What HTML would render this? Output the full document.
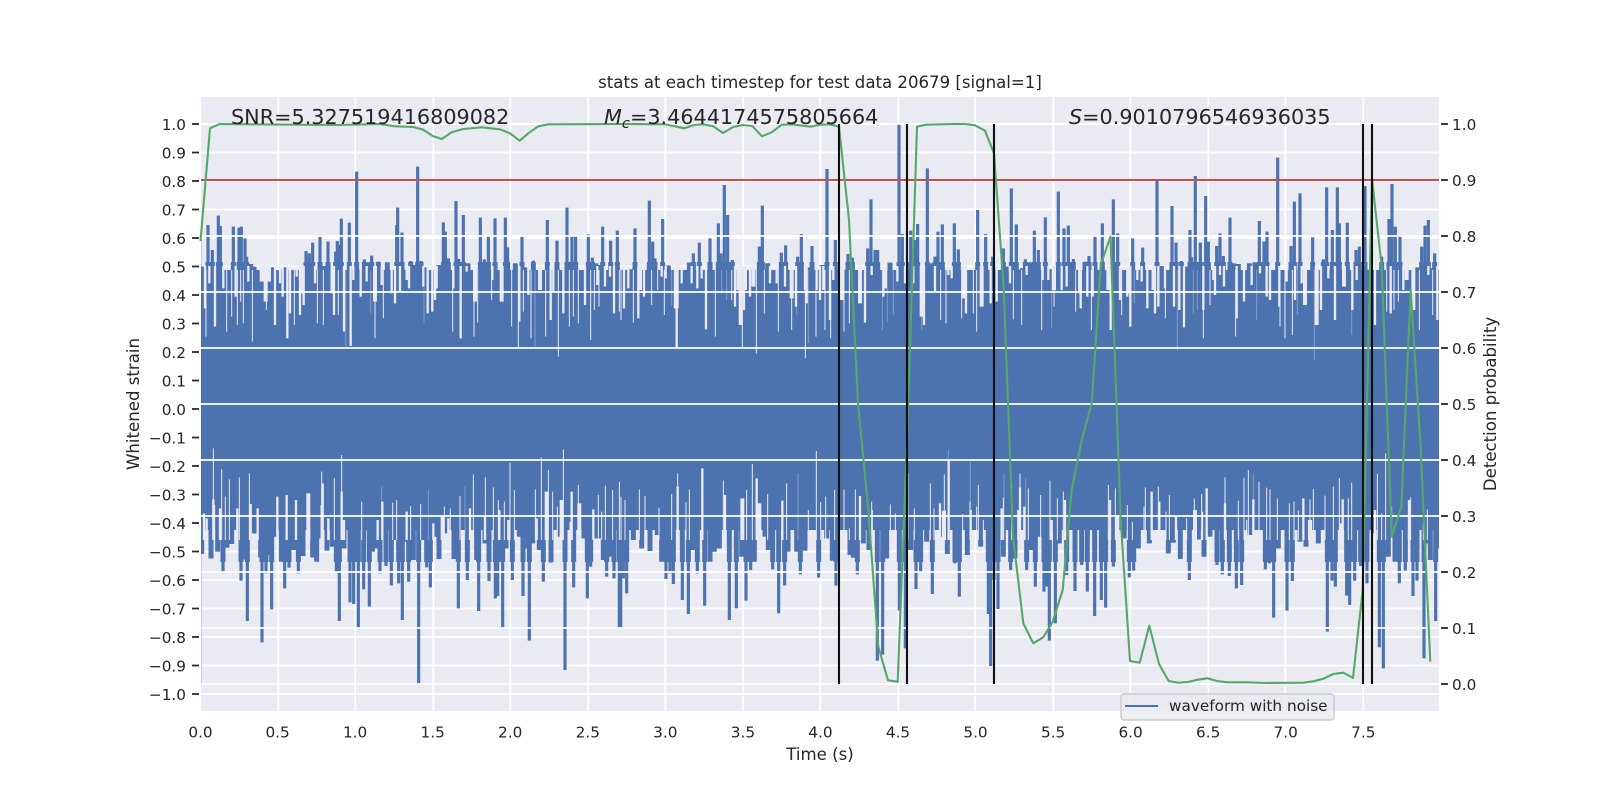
<!DOCTYPE html>
<html><head><meta charset="utf-8"><style>
html,body{margin:0;padding:0;background:#fff;width:1600px;height:800px;overflow:hidden}
svg{display:block}
text{font-family:"DejaVu Sans","Liberation Sans",sans-serif;fill:#262626}
.t{font-size:15.28px}
.l{font-size:16.58px}
.a{font-size:20.75px}
.n1{stroke:#eaeaf2;stroke-width:3;fill:none}
.n2{stroke:#eaeaf2;stroke-width:7;fill:none}
.n3{stroke:#eaeaf2;stroke-width:12;fill:none}
.nf{stroke:#eaeaf2;stroke-width:3;stroke-opacity:.35;fill:none}
</style></head><body>
<svg width="1600" height="800" viewBox="0 0 1600 800" xmlns="http://www.w3.org/2000/svg">
<defs><clipPath id="c"><rect x="201" y="97" width="1238" height="614"/></clipPath>
<clipPath id="b"><rect x="201" y="262" width="1238" height="40"/><rect x="201" y="525" width="1238" height="37"/></clipPath>
<g id="s" stroke="#4c72b0" fill="none">
<path transform="translate(120 60) scale(.33333)" d="M248 620V800M254 710V800M264 495V800M270 670V800M277 570V800M283 780V800M295 467V800M301 498V800M307 690V800M318 635V800M329 640V800M340 500V800M347 710V800M357 503V800M364 500V800M375 535V800M380 590V800M392 612V800M402 620V800M410 632V800M420 670V800M430 720V800M440 750V800M450 660V800M457 622V800M466 770V800M478 642V800M485 710V800M494 622V800M503 770V800M512 630V800M520 745V800M529 652V800M535 695V800M545 715V800M551 740V800M558 573V800M568 580V800M578 548V800M587 670V800M600 525V800M607 625V800M615 618V800M624 545V800M635 700V800M647 575V800M652 543V800M658 555V800M664 476V800M678 677V800M688 488V800M698 695V800M710 335V800M716 632V800M733 598V800M743 665V800M747 607V800M755 587V800M763 725V800M775 605V800M785 680V800M795 640V800M802 607V800M808 725V800M818 665V800M830 495V800M833 443V800M846 518V800M853 645V800M860 633V800M872 603V800M880 615V800M893 320V800M903 603V800M917 622V800M932 632V800M943 685V800M957 615V800M970 487V800M976 515V800M985 595V800M995 630V800M1008 423V800M1016 597V800M1030 465V800M1037 635V800M1044 610V800M1056 650V800M1065 735V800M1081 473V800M1093 598V800M1105 527V800M1112 660V800M1125 475V800M1135 660V800M1145 722V800M1156 473V800M1163 562V800M1175 640V800M1186 610V800M1206 528V800M1215 622V800M1230 690V800M1240 602V800M1250 660V800M1267 675V800M1272 635V800M1282 480V800M1292 690V800M1305 680V800M1311 542V800M1320 656V800M1330 745V800M1341 443V800M1348 625V800M1356 527V800M1367 527V800M1378 700V800M1388 645V800M1405 523V800M1417 593V800M1427 610V800M1435 680V800M1442 615V800M1448 500V800M1460 650V800M1472 542V800M1482 655V800M1492 512V800"/>
<path transform="translate(620 60) scale(.33333)" d="M5 695V800M18 655V800M30 628V800M45 505V800M60 690V800M72 710V800M88 422V800M98 545V800M105 595V800M118 655V800M128 477V800M135 655V800M145 617V800M155 693V800M180 675V800M190 650V800M200 630V800M208 608V800M220 580V800M228 655V800M238 548V800M247 652V800M258 740V800M270 535V800M280 640V800M295 490V800M303 580V800M313 375V800M323 465V800M337 600V800M350 670V800M372 750V800M380 650V800M392 705V800M402 680V800M410 630V800M418 560V800M427 437V800M443 610V800M460 640V800M470 660V800M484 578V800M497 556V800M507 720V800M518 700V800M533 590V800M544 522V800M552 685V800M565 622V800M576 558V800M583 655V800M592 675V800M606 615V800M621 327V800M630 700V800M646 540V800M660 695V800M678 720V800M684 582V800M697 593V800M707 740V800M720 725V800M743 565V800M753 418V800M765 570V800M773 570V800M783 650V800M797 690V800M810 608V800M826 632V800M837 192V800M847 522V800M858 675V800M872 512V800M885 540V800M893 492V800M903 745V800M922 325V800M932 610V800M945 590V800M954 515V800M967 493V800M978 645V800M987 630V800M1003 490V800M1015 568V800M1028 725V800M1040 710V800M1052 695V800M1064 670V800M1073 450V800M1082 740V800M1097 522V800M1108 648V800M1118 590V800M1150 565V800M1158 620V800M1174 385V800M1189 493V800M1207 625V800M1216 598V800M1228 607V800M1243 512V800M1255 570V800M1265 630V800M1276 472V800M1290 628V800M1300 670V800M1315 395V800M1332 505V800M1345 497V800M1360 597V800M1370 655V800M1395 605V800M1407 588V800M1425 525V800M1437 690V800M1447 490V800M1465 685V800M1480 418V800M1493 520V800"/>
<path transform="translate(1050 60) scale(.33333)" d="M248 535V800M258 662V800M265 668V800M278 563V800M285 690V800M297 638V800M305 662V800M321 363V800M335 618V800M342 682V800M358 635V800M366 438V800M378 548V800M394 603V800M408 620V800M420 510V800M425 592V800M436 348V800M451 548V800M467 408V800M475 545V800M488 652V800M500 558V800M510 520V800M520 588V800M530 640V800M540 473V800M551 610V800M565 612V800M590 638V800M598 610V800M615 607V800M628 483V800M642 545V800M651 515V800M673 630V800M683 293V800M700 648V800M715 668V800M723 558V800M733 425V800M750 400V800M774 632V800M788 532V800M820 598V800M830 382V800M847 510V800M862 382V800M868 490V800M880 680V800M892 488V800M910 720V800M918 570V800M928 560V800M945 378V800M957 700V800M980 735V800M995 590V800M1008 630V800M1017 477V800M1026 372V800M1036 500V800M1050 525V800M1058 695V800M1070 665V800M1101 622V800M1115 560V800M1125 497V800M1135 480V800M1142 625V800M1154 580V800M1160 735V800"/>
<path transform="translate(120 480) scale(.33333)" d="M245 222V-10M258 110V-10M273 235V-10M282 140V-10M293 215V-10M309 275V-10M321 203V-10M335 192V-10M345 140V-10M363 302V-10M373 238V-10M382 423V-10M403 160V-10M422 232V-10M426 487V-10M438 280V-10M447 225V-10M455 388V-10M466 170V-10M484 245V-10M494 325V-10M507 263V-10M521 210V-10M535 280V-10M549 228V-10M578 232V-10M590 245V-10M597 175V-10M621 212V-10M637 200V-10M649 275V-10M658 423V-10M672 205V-10M690 367V-10M701 372V-10M715 442V-10M731 328V-10M748 380V-10M757 215V-10M770 205V-10M780 280V-10M798 258V-10M814 316V-10M825 180V-10M836 310V-10M847 420V-10M855 185V-10M866 305V-10M880 240V-10M896 610V-10M908 180V-10M920 262V-10M931 322V-10M945 170V-10M957 237V-10M980 160V-10M1002 237V-10M1015 385V-10M1030 147V-10M1042 300V-10M1060 150V-10M1070 240V-10M1076 393V-10M1095 190V-10M1107 303V-10M1126 355V-10M1133 348V-10M1148 442V-10M1158 205V-10M1177 300V-10M1190 140V-10M1198 170V-10M1209 348V-10M1218 205V-10M1228 482V-10M1238 190V-10M1258 210V-10M1270 305V-10M1293 248V-10M1305 150V-10M1318 170V-10M1335 570V-10M1348 130V-10M1361 322V-10M1376 120V-10M1392 175V-10M1402 355V-10M1412 260V-10M1428 175V-10M1440 175V-10M1450 240V-10M1460 290V-10M1468 230V-10M1482 295V-10M1498 445V-10"/>
<path transform="translate(620 480) scale(.33333)" d="M2 445V-10M10 295V-10M20 340V-10M40 180V-10M65 205V-10M90 213V-10M100 60V-10M112 165V-10M125 245V-10M138 297V-10M150 280V-10M160 312V-10M172 100V-10M187 360V-10M205 402V-10M220 210V-10M232 280V-10M254 377V-10M270 245V-10M283 215V-10M298 205V-10M315 70V-10M328 420V-10M349 385V-10M365 230V-10M378 362V-10M392 270V-10M403 245V-10M420 80V-10M435 170V-10M445 210V-10M458 268V-10M476 400V-10M494 316V-10M504 215V-10M520 140V-10M530 215V-10M541 283V-10M555 212V-10M578 150V-10M596 293V-10M620 175V-10M637 242V-10M648 317V-10M665 140V-10M690 225V-10M700 233V-10M712 283V-10M730 190V-10M747 210V-10M772 542V-10M788 524V-10M800 235V-10M820 140V-10M838 392V-10M856 505V-10M872 210V-10M888 327V-10M902 275V-10M920 185V-10M937 342V-10M950 100V-10M965 170V-10M982 222V-10M1005 250V-10M1018 350V-10M1030 100V-10M1042 225V-10M1060 150V-10M1082 200V-10M1095 130V-10M1105 402V-10M1112 558V-10M1122 300V-10M1134 387V-10M1150 230V-10M1172 270V-10M1185 235V-10M1220 270V-10M1232 210V-10M1246 320V-10M1258 170V-10M1272 335V-10M1280 320V-10M1288 482V-10M1306 430V-10M1318 190V-10M1340 285V-10M1365 333V-10M1385 255V-10M1402 335V-10M1424 408V-10M1444 360V-10M1457 383V-10M1480 260V-10M1490 170V-10"/>
<path transform="translate(1050 480) scale(.33333)" d="M222 175V-10M238 292V-10M251 272V-10M265 205V-10M298 190V-10M355 220V-10M370 188V-10M391 237V-10M418 300V-10M445 178V-10M462 230V-10M480 170V-10M501 255V-10M517 283V-10M538 288V-10M559 325V-10M575 315V-10M600 165V-10M620 150V-10M646 268V-10M658 250V-10M671 413V-10M685 205V-10M711 392V-10M727 303V-10M750 185V-10M768 200V-10M805 190V-10M832 455V-10M846 302V-10M856 320V-10M870 130V-10M890 347V-10M899 375V-10M914 302V-10M932 258V-10M951 310V-10M970 160V-10M988 502V-10M1000 565V-10M1015 230V-10M1035 245V-10M1048 310V-10M1066 272V-10M1089 348V-10M1101 302V-10M1122 535V-10M1130 190V-10M1141 240V-10M1157 423V-10M1165 205V-10"/>
</g></defs>
<rect x="201" y="97" width="1238" height="614" fill="#eaeaf2"/>
<path stroke="#fff" stroke-width="1.7" fill="none" d="M201 124H1439M201 152.5H1439M201 181H1439M201 209.5H1439M201 238H1439M201 266.5H1439M201 295H1439M201 323.5H1439M201 352H1439M201 380.5H1439M201 409H1439M201 437.5H1439M201 466H1439M201 494.5H1439M201 523H1439M201 551.5H1439M201 580H1439M201 608.5H1439M201 637H1439M201 665.5H1439M201 694H1439M278.3 97V711M355.3 97V711M433.3 97V711M510.3 97V711M588.3 97V711M665.3 97V711M743.3 97V711M820.3 97V711M898.3 97V711M975.3 97V711M1053.3 97V711M1130.3 97V711M1208.3 97V711M1285.3 97V711M1363.3 97V711"/>
<g clip-path="url(#c)">
<path stroke="#4c72b0" stroke-opacity=".25" stroke-width="2" d="M201 240V683"/>
<rect x="201" y="270" width="1238" height="260" fill="#4c72b0"/>
<use href="#s" stroke-width="9.5"/>
<g clip-path="url(#b)"><use href="#s" stroke-width="15"/></g>

<g transform="translate(200 270) scale(.33333)">
<path class="n3" d="M185 -12V35M197 -12V95M207 -12V35M305 -12V70M825 -12V95M905 -12V95M1020 -12V60M525 -12V95"/>
<path class="n2" d="M15 -12V115M45 -12V170M28 -12V40M70 -12V55M107 -12V80M145 -12V35M225 -12V165M240 -12V40M248 -12V80M262 -12V205M270 -12V130M290 -12V20M300 -12V135M311 -12V105M345 -12V40M395 -12V70M402 -12V135M432 -12V185M452 -12V228M460 -12V30M482 -12V80M500 -12V35M545 -12V45M575 -12V70M585 -12V100M600 -12V65M620 -12V30M627 -12V55M670 -12V50M683 -12V130M697 -12V125M705 -12V90M710 -12V55M760 -12V55M782 -12V205M800 -12V5M877 -12V30M958 -12V155M985 -12V75M1052 -12V150M1060 -12V65M1090 -12V130M1155 -12V105M1192 -12V45M1215 -12V50M1230 -12V20M1242 -12V130"/>
<path class="n1" d="M18 0V200M80 0V185M95 0V140M112 0V165M122 0V95M130 0V160M157 0V215M199 0V120M283 0V165M352 0V160M370 0V165M415 0V135M525 0V205M550 0V145M758 0V185M833 0V158M822 0V200M875 0V90M935 0V170M955 0V232M970 0V125M993 0V205M1037 0V200M1075 0V260M1108 0V170M1120 0V140M1135 0V160M1172 0V210M1183 0V120M1197 0V110M1258 0V125"/>
<path class="nf" d="M437 0V230M512 0V130M672 0V160M1005 0V230"/>
</g>
<g transform="translate(620 270) scale(.33333)">
<path class="n3" d="M60 -12V60M170 -12V115M355 -12V60M375 -12V60M400 -12V50M515 -12V85M665 -12V90M720 -12V100M795 -12V55M905 -12V140M1030 -12V85M1085 -12V110M362 -12V165"/>
<path class="n2" d="M12 -12V115M25 -12V55M55 -12V145M72 -12V80M125 -12V20M137 -12V25M165 -12V115M170 -12V235M185 -12V40M215 -12V40M232 -12V55M245 -12V25M258 -12V178M345 -12V110M372 -12V120M390 -12V80M450 -12V40M470 -12V40M495 -12V50M528 -12V110M555 -12V60M560 -12V100M590 -12V60M600 -12V90M610 -12V60M630 -12V150M640 -12V30M735 -12V158M755 -12V15M790 -12V80M832 -12V35M855 -12V40M880 -12V40M912 -12V165M945 -12V65M985 -12V15M995 -12V25M1038 -12V130M1112 -12V100M1130 -12V95M1170 -12V40M1220 -12V15"/>
<path class="n1" d="M3 0V150M40 0V158M95 0V105M113 0V60M133 0V135M286 0V200M335 0V90M367 0V232M409 0V250M433 0V130M475 0V185M515 0V180M556 0V265M588 0V200M615 0V180M632 0V205M672 0V185M688 0V160M962 0V150M978 0V160M1025 0V145M1060 0V130M1070 0V185M1180 0V148M1205 0V165"/>
<path class="nf" d="M155 0V110M305 0V70M320 0V90M530 0V135M565 0V220M787 0V180M802 0V155M820 0V135M905 0V180"/>
</g>
<g transform="translate(1040 270) scale(.33333)">
<path class="n3" d="M42 -12V60M120 -12V70M205 -12V60M265 -12V70M795 -12V105M912 -12V50M830 -12V165M1100 -12V30M1120 -12V120"/>
<path class="n2" d="M8 -12V30M25 -12V30M65 -12V60M80 -12V50M122 -12V115M142 -12V80M158 -12V80M212 -12V180M240 -12V90M262 -12V80M271 -12V170M292 -12V30M305 -12V35M322 -12V115M345 -12V130M338 -12V60M355 -12V110M375 -12V55M402 -12V110M418 -12V120M432 -12V172M490 -12V120M525 -12V75M520 -12V30M552 -12V50M540 -12V15M590 -12V145M612 -12V95M635 -12V45M660 -12V10M690 -12V90M680 -12V80M718 -12V110M740 -12V35M765 -12V90M785 -12V40M843 -12V120M885 -12V150M865 -12V25M937 -12V120M950 -12V30M1005 -12V165M1052 -12V130M1090 -12V60M1165 -12V15M1192 -12V150"/>
<path class="n1" d="M5 0V180M42 0V110M107 0V125M154 0V180M245 0V135M376 0V145M490 0V205M510 0V105M587 0V200M720 0V170M735 0V205M757 0V195M1040 0V125M1062 0V120M1075 0V95M1138 0V180M1178 0V135"/>
<path class="nf" d="M35 0V175M283 0V100M412 0V240M460 0V130M472 0V120M650 0V150M772 0V135M823 0V270M935 0V195"/>
</g>
<g transform="translate(200 440) scale(.33333)">
<path class="n3" d="M325 160V300M728 230V300M1040 155V300M1085 180V300M1138 190V300"/>
<path class="n2" d="M12 220V300M20 235V300M42 195V300M40 178V300M60 205V300M112 205V300M152 192V300M173 205V300M232 170V300M260 165V300M288 180V300M368 130V300M365 195V300M425 155V300M432 240V300M385 235V300M533 240V300M547 185V300M620 215V300M700 250V300M745 235V300M810 205V300M855 225V300M898 210V300M925 240V300M1010 235V300M1115 155V300M1112 245V300M1180 208V300"/>
<path class="n1" d="M40 25V300M65 88V300M88 118V300M118 112V300M148 100V300M76 170V300M365 95V300M403 115V300M425 45V300M485 185V300M578 188V300M590 180V300M632 198V300M662 192V300M733 200V300M751 205V300M780 168V300M820 103V300M856 112V300M880 142V300M895 180V300M913 185V300M930 68V300M943 150V300M1006 148V300M1024 52V300M1045 90V300M1058 155V300M1072 200V300M1090 28V300M1135 135V300M1195 165V300M1205 215V300M1216 137V300M1238 150V300M1258 125V300"/>
<path class="nf" d="M545 140V300M685 150V300M795 140V300"/>
</g>
<g transform="translate(620 440) scale(.33333)">
<path class="n3" d="M367 175V300M418 190V300M972 212V300"/>
<path class="n2" d="M173 140V300M247 85V300M315 165V300M410 115V300M487 182V300M720 168V300M960 190V300M986 58V300M1052 210V300M1145 205V300M1195 210V300M1200 142V300M1213 200V300"/>
<path class="n1" d="M3 170V300M15 180V300M58 148V300M75 168V300M117 203V300M155 162V300M173 100V300M198 187V300M208 148V300M310 122V300M380 150V300M397 72V300M443 162V300M500 130V300M565 210V300M602 187V300M617 170V300M589 33V300M644 150V300M672 148V300M688 265V300M706 148V300M755 185V300M757 210V300M811 193V300M826 220V300M864 100V300M883 205V300M931 130V300M942 205V300M973 103V300M1028 222V300M1050 185V300M1075 135V300M1070 200V300M1090 240V300M1150 172V300M1175 128V300M1200 100V300M1225 145V300"/>
<path class="nf" d="M534 100V300M985 30V300M1051 65V300M1152 100V300M1217 115V300"/>
</g>
<g transform="translate(1040 440) scale(.33333)">
<path class="n3" d="M232 225V300M465 210V300M905 250V300M810 240V300"/>
<path class="n2" d="M35 240V300M75 180V300M210 180V300M335 155V300M358 185V300M408 225V300M500 145V300M555 190V300M640 178V300M790 175V300M908 178V300M1005 210V300M1107 180V300"/>
<path class="n1" d="M2 165V300M30 122V300M52 175V300M70 155V300M205 135V300M226 145V300M262 195V300M277 245V300M316 142V300M312 200V300M355 140V300M378 215V300M388 165V300M440 235V300M463 175V300M485 162V300M488 215V300M555 112V300M595 182V300M612 113V300M620 240V300M625 90V300M657 125V300M680 143V300M690 148V300M712 175V300M748 190V300M762 185V300M775 212V300M810 178V300M820 147V300M855 167V300M880 140V300M898 115V300M925 175V300M935 128V300M1012 102V300M1025 220V300M1037 40V300M1055 200V300M1112 172V300M1162 208V300M1150 248V300"/>
<path class="nf" d="M640 100V300"/>
</g>
</g>
<path stroke="#fff" stroke-width="1.7" fill="none" d="M201 124H1439M201 180H1439M201 236H1439M201 292H1439M201 348H1439M201 404H1439M201 460H1439M201 516H1439M201 572H1439M201 628H1439M201 684H1439"/>
<path stroke="#c44e52" stroke-width="2.1" fill="none" d="M201 180H1439"/>
<polyline fill="none" stroke="#55a868" stroke-width="2.1" stroke-linejoin="round" points="200.5,241 210,128.3 219.7,124 336.7,125 380,124 395,126.3 413.3,127 423.3,129.7 432.7,136 441.7,139 451.7,132.3 463.3,129 481.7,127.3 500,129.3 510,133.3 519.7,140.7 528.3,133.3 538.3,126.3 548.3,124.3 620,124 665,124.3 684.3,128.3 694,125 703.3,124.3 713.3,126.3 723,133 733.3,127 743,125 752.3,126 762,136.3 771.7,132.3 781.7,124.7 791.7,124.3 810.7,126.7 820,124.7 830,124.3 839,126.7 849,220 858,403 868.3,510 878.3,646.7 888,680.3 897.7,681.7 907.4,430 917,126.7 926,124.7 953.3,124 965,124 975,125.3 985,130.7 994,153.3 1003.7,288 1013,536.7 1023.3,623.3 1033.3,643.3 1043.3,637.3 1052.7,621.7 1062.7,590 1071.7,490 1082,439 1091.8,403 1100.7,265 1110.5,236.7 1120.7,520 1130,661 1139.7,662.7 1149.3,625.7 1159,664 1168.7,681 1178.3,682.7 1188,682 1197.7,679.7 1207.3,678.3 1217,681 1226.7,682.3 1246.7,682.3 1266.7,683 1303.3,682.7 1313.3,681.3 1323.3,678.7 1333.3,674 1343.3,672.7 1353,678 1362.7,590 1372,179 1381.7,266.7 1391.7,536.7 1401.3,506.7 1410.7,290 1420.6,447 1430.3,661.7"/>
<path stroke="#111" stroke-width="2.1" fill="none" d="M839 124V684M907 124V684M994 124V684M1363 124V684M1372 124V684"/>
<path stroke="#262626" stroke-width="1.8" fill="none" d="M192 124H199M192 152.5H199M192 181H199M192 209.5H199M192 238H199M192 266.5H199M192 295H199M192 323.5H199M192 352H199M192 380.5H199M192 409H199M192 437.5H199M192 466H199M192 494.5H199M192 523H199M192 551.5H199M192 580H199M192 608.5H199M192 637H199M192 665.5H199M192 694H199M1441 124H1448M1441 180H1448M1441 236H1448M1441 292H1448M1441 348H1448M1441 404H1448M1441 460H1448M1441 516H1448M1441 572H1448M1441 628H1448M1441 684H1448"/>
<g class="t" text-anchor="end">
<text x="186" y="130">1.0</text><text x="186" y="158.5">0.9</text><text x="186" y="187">0.8</text><text x="186" y="215.5">0.7</text><text x="186" y="244">0.6</text><text x="186" y="272.5">0.5</text><text x="186" y="301">0.4</text><text x="186" y="329.5">0.3</text><text x="186" y="358">0.2</text><text x="186" y="386.5">0.1</text><text x="186" y="415">0.0</text><text x="186" y="443.5">−0.1</text><text x="186" y="472">−0.2</text><text x="186" y="500.5">−0.3</text><text x="186" y="529">−0.4</text><text x="186" y="557.5">−0.5</text><text x="186" y="586">−0.6</text><text x="186" y="614.5">−0.7</text><text x="186" y="643">−0.8</text><text x="186" y="671.5">−0.9</text><text x="186" y="700">−1.0</text>
</g>
<g class="t">
<text x="1452" y="130">1.0</text><text x="1452" y="186">0.9</text><text x="1452" y="242">0.8</text><text x="1452" y="298">0.7</text><text x="1452" y="354">0.6</text><text x="1452" y="410">0.5</text><text x="1452" y="466">0.4</text><text x="1452" y="522">0.3</text><text x="1452" y="578">0.2</text><text x="1452" y="634">0.1</text><text x="1452" y="690">0.0</text>
</g>
<g class="t" text-anchor="middle">
<text x="200.5" y="737.5">0.0</text><text x="277.6" y="737.5">0.5</text><text x="355.1" y="737.5">1.0</text><text x="432.7" y="737.5">1.5</text><text x="510.2" y="737.5">2.0</text><text x="587.8" y="737.5">2.5</text><text x="665.3" y="737.5">3.0</text><text x="742.9" y="737.5">3.5</text><text x="820.4" y="737.5">4.0</text><text x="898" y="737.5">4.5</text><text x="975.5" y="737.5">5.0</text><text x="1053.1" y="737.5">5.5</text><text x="1130.6" y="737.5">6.0</text><text x="1208.2" y="737.5">6.5</text><text x="1285.7" y="737.5">7.0</text><text x="1363.3" y="737.5">7.5</text>
</g>
<text class="l" x="820" y="88" text-anchor="middle">stats at each timestep for test data 20679 [signal=1]</text>
<text class="l" x="820" y="760" text-anchor="middle">Time (s)</text>
<text class="l" transform="translate(139 404) rotate(-90)" text-anchor="middle">Whitened strain</text>
<text class="l" transform="translate(1496 404) rotate(-90)" text-anchor="middle">Detection probability</text>
<text class="a" x="231" y="124">SNR=5.327519416809082</text>
<text class="a" x="604" y="124"><tspan font-style="italic">M</tspan><tspan font-style="italic" font-size="14.6" dy="4">c</tspan><tspan dy="-4">=3.4644174575805664</tspan></text>
<text class="a" x="1069" y="124"><tspan font-style="italic">S</tspan>=0.9010796546936035</text>
<rect x="1121" y="694" width="213" height="26" rx="3" fill="#eaeaf2" fill-opacity=".8" stroke="#cccccc" stroke-width="1.4"/>
<path stroke="#4c72b0" stroke-width="2.1" fill="none" d="M1125 706H1158"/>
<text class="t" x="1169" y="711">waveform with noise</text>
</svg>
</body></html>
